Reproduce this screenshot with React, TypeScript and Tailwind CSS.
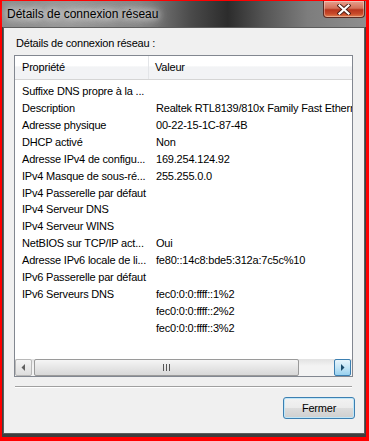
import React from 'react';

const rows: [string, string][] = [
  ['Suffixe DNS propre à la ...', ''],
  ['Description', 'Realtek RTL8139/810x Family Fast Ethernet NIC'],
  ['Adresse physique', '00-22-15-1C-87-4B'],
  ['DHCP activé', 'Non'],
  ['Adresse IPv4 de configu...', '169.254.124.92'],
  ['IPv4 Masque de sous-ré...', '255.255.0.0'],
  ['IPv4 Passerelle par défaut', ''],
  ['IPv4 Serveur DNS', ''],
  ['IPv4 Serveur WINS', ''],
  ['NetBIOS sur TCP/IP act...', 'Oui'],
  ['Adresse IPv6 locale de li...', 'fe80::14c8:bde5:312a:7c5c%10'],
  ['IPv6 Passerelle par défaut', ''],
  ['IPv6 Serveurs DNS', 'fec0:0:0:ffff::1%2'],
  ['', 'fec0:0:0:ffff::2%2'],
  ['', 'fec0:0:0:ffff::3%2'],
];

const CloseButton: React.FC = () => (
  <div className="absolute right-[1px] top-0 w-[42px] h-[17px] rounded-b-[4px] border border-t-0 border-[#5a2a22] bg-[linear-gradient(to_bottom,#e6a08e_0%,#d4715a_45%,#b8351d_55%,#c84a2a_80%,#e0804f_100%)] flex items-center justify-center shadow-[inset_0_0_0_1px_rgba(255,255,255,0.35)]">
    <svg width="14" height="11" viewBox="0 0 14 11">
      <path d="M2.5 1.5 L11.5 9.5 M11.5 1.5 L2.5 9.5" stroke="#4a1d14" strokeWidth="4" strokeLinecap="square" />
      <path d="M2.5 1.5 L11.5 9.5 M11.5 1.5 L2.5 9.5" stroke="#ffffff" strokeWidth="2.2" strokeLinecap="square" />
    </svg>
  </div>
);

const ScrollBar: React.FC = () => (
  <div className="h-[17px] flex items-stretch shrink-0 bg-[linear-gradient(to_bottom,#e2e2e2,#f3f3f3_40%,#f3f3f3)]">
    <div className="w-[17px] rounded-[2px] border border-[#b8b8b8] bg-[linear-gradient(to_bottom,#f4f4f4,#dedede)] flex items-center justify-center">
      <svg width="5" height="7" viewBox="0 0 5 7"><path d="M4 0 L0.5 3.5 L4 7 Z" fill="#606060" /></svg>
    </div>
    <div className="ml-[2px] w-[265px] rounded-[2px] border border-[#9a9a9a] bg-[linear-gradient(to_bottom,#f5f5f5,#e6e6e6_50%,#d8d8d8)] flex items-center justify-center">
      <svg width="7" height="7" viewBox="0 0 7 7">
        <path d="M0.5 0 V7 M3.5 0 V7 M6.5 0 V7" stroke="#555" strokeWidth="1" />
      </svg>
    </div>
    <div className="flex-1" />
    <div className="w-[17px] rounded-[2px] border border-[#3c7fb1] bg-[linear-gradient(to_bottom,#e8f5fc,#c4e5f6_50%,#98d1ef)] flex items-center justify-center mr-[1px]">
      <svg width="5" height="7" viewBox="0 0 5 7"><path d="M1 0 L4.5 3.5 L1 7 Z" fill="#1c4c6c" /></svg>
    </div>
  </div>
);

export default function App() {
  return (
    <div className="w-[369px] h-[441px] bg-[#ff0000] pt-[1px] pl-[2px] pr-[3px] pb-[4px] flex font-['Liberation_Sans',Arial,sans-serif] text-black">
      <div className="flex-1 flex flex-col bg-[#3e3e3e] px-[1px] pb-[3px]">
        <div className="relative h-[26px] -mx-[1px] bg-[linear-gradient(to_right,#8a8a8a_0%,#979797_18%,#858585_38%,#4a4a4a_52%,#2c2c2c_62%,#555_72%,#7d7d7d_84%,#8e8e8e_100%)]">
          <span className="absolute left-[5px] top-[6px] text-[12px] leading-[15px] [text-shadow:0_0_6px_#e8e8e8,0_0_10px_#e0e0e0,0_0_14px_#d8d8d8]">
            Détails de connexion réseau
          </span>
          <CloseButton />
        </div>
        <div className="flex-1 flex flex-col border border-[#5c5c5c] bg-[#f0f0f0] text-[11px] tracking-[-0.2px]">
          <div className="pt-[9px] pl-[12px] h-[22px] leading-[13px]">Détails de connexion réseau :</div>
          <div className="mt-[5px] ml-[10px] w-[339px] h-[322px] border border-[#828790] bg-white flex flex-col overflow-hidden">
            <div className="h-[24px] flex border-b border-[#d5d5d5] bg-[linear-gradient(to_bottom,#ffffff_0%,#ffffff_45%,#f2f3f5_46%,#f2f3f5_100%)] shrink-0">
              <div className="w-[134px] shrink-0 pl-[7px] flex items-center border-r border-[#e3e5e8]">Propriété</div>
              <div className="flex-1 pl-[6px] flex items-center">Valeur</div>
            </div>
            <div className="flex-1 pt-[3px] overflow-hidden">
              {rows.map(([label, value], i) => (
                <div key={i} className="h-[16.9px] flex items-center whitespace-nowrap">
                  <div className="w-[134px] shrink-0 pl-[7px] overflow-hidden">{label}</div>
                  <div className="flex-1 min-w-0 pl-[7px] overflow-hidden">{value}</div>
                </div>
              ))}
            </div>
            <ScrollBar />
          </div>
          <div className="mt-[9px] ml-[11px] w-[337px] h-[2px] border-t border-[#a0a0a0] border-b border-b-white" />
          <div className="mt-[9px] flex justify-end pr-[9px]">
            <button className="w-[72px] h-[22px] rounded-[3px] border border-[#3c7fb1] bg-[linear-gradient(to_bottom,#f2f2f2_0%,#ebebeb_50%,#dddddd_51%,#cfcfcf_100%)] shadow-[inset_0_0_0_1px_#bfe6f8] text-[11px] tracking-[-0.2px]">
              Fermer
            </button>
          </div>
        </div>
      </div>
    </div>
  );
}
